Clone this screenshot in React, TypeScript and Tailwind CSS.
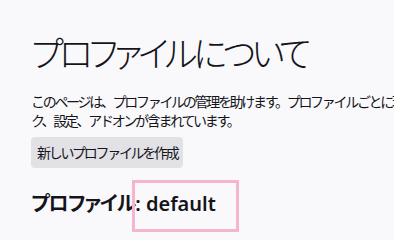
import React from "react";

export default function App() {
  return (
    <div className="relative w-[394px] h-[240px] overflow-hidden bg-[#f9f9fb] text-[#15141a] font-['Segoe_UI','Noto_Sans','Noto_Sans_CJK_JP',sans-serif]">
      <div className="pl-[31px] pt-[24px]">
        <h1 className="text-[35px] leading-[56px] font-light whitespace-nowrap tracking-[-4.2px] font-['Noto_Sans_CJK_JP',sans-serif] [font-feature-settings:'palt']">
          プロファイルについて
        </h1>
        <div className="mt-[12px] text-[14px] leading-[19px] whitespace-nowrap tracking-[-2.3px] font-['Noto_Sans_CJK_JP',sans-serif]">
          <div>このページは、プロファイルの管理を助けます。プロファイルごとに現在の履歴、ブックマー</div>
          <div>ク、設定、アドオンが含まれています。</div>
        </div>
        <button className="mt-[7px] h-[31px] w-[152px] rounded-[4px] bg-[#e2e2e6] text-[14px] text-left pl-[6px] whitespace-nowrap tracking-[-2.3px] font-['Noto_Sans_CJK_JP',sans-serif]">
          新しいプロファイルを作成
        </button>
        <h2 className="mt-[21px] text-[20px] leading-[28px] font-bold whitespace-nowrap">
          <span className="font-['Noto_Sans_CJK_JP',sans-serif] tracking-[-1px] [font-feature-settings:'palt']">プロファイル</span>
          <span className="font-semibold">: default</span>
        </h2>
      </div>
      <div className="absolute left-[132px] top-[180px] w-[107px] h-[52px] border-[3px] border-[#f5b4cf]" />
    </div>
  );
}
